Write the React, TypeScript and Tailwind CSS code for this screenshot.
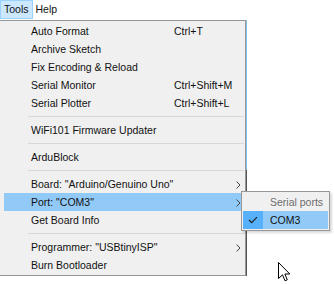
import type { ReactNode } from "react";

type Item =
  | { kind: "item"; label: string; shortcut?: string; submenu?: boolean; active?: boolean }
  | { kind: "sep" };

const items: Item[] = [
  { kind: "item", label: "Auto Format", shortcut: "Ctrl+T" },
  { kind: "item", label: "Archive Sketch" },
  { kind: "item", label: "Fix Encoding & Reload" },
  { kind: "item", label: "Serial Monitor", shortcut: "Ctrl+Shift+M" },
  { kind: "item", label: "Serial Plotter", shortcut: "Ctrl+Shift+L" },
  { kind: "sep" },
  { kind: "item", label: "WiFi101 Firmware Updater" },
  { kind: "sep" },
  { kind: "item", label: "ArduBlock" },
  { kind: "sep" },
  { kind: "item", label: 'Board: "Arduino/Genuino Uno"', submenu: true },
  { kind: "item", label: 'Port: "COM3"', submenu: true, active: true },
  { kind: "item", label: "Get Board Info" },
  { kind: "sep" },
  { kind: "item", label: 'Programmer: "USBtinyISP"', submenu: true },
  { kind: "item", label: "Burn Bootloader" },
];

function Chevron() {
  return (
    <svg width="5" height="8" viewBox="0 0 5 8" className="shrink-0">
      <path d="M0.5 0.5 L4 4 L0.5 7.5" fill="none" stroke="#444" strokeWidth="1" />
    </svg>
  );
}

function Row({ item }: { item: Extract<Item, { kind: "item" }> }): ReactNode {
  return (
    <div className={`flex h-[18px] items-center pl-[27px] pr-[3px] pt-px ${item.active ? "bg-[#91c9f7]" : ""}`}>
      <span className="w-[143px] shrink-0 whitespace-nowrap">{item.label}</span>
      <span className="whitespace-nowrap">{item.shortcut ?? ""}</span>
      {item.submenu ? (
        <span className="ml-auto">
          <Chevron />
        </span>
      ) : null}
    </div>
  );
}

export default function App() {
  return (
    <div className="relative h-[284px] w-[334px] overflow-hidden bg-white font-['Liberation_Sans',Arial,sans-serif] text-[10.5px] leading-none text-[#111]">
      {/* menu bar */}
      <div className="flex h-[20px] items-stretch">
        <div className="box-border flex h-[19px] items-center border border-[#99d1ff] bg-[#cce8ff] px-[3px]">Tools</div>
        <div className="flex h-[19px] items-center px-[3px]">Help</div>
      </div>

      {/* Tools dropdown */}
      <div className="flex w-[247px]">
        <div className="box-border w-[246px] border-t border-r border-b border-[#979797] bg-[#f0f0f0] py-[1px] pl-[4px] pr-[1px]">
          {items.map((item, i) =>
            item.kind === "sep" ? (
              <div key={i} className="flex h-[9px] items-center pl-[24px]">
                <div className="h-px w-full bg-[#d7d7d7]" />
              </div>
            ) : (
              <Row key={i} item={item} />
            )
          )}
        </div>
        <div className="flex w-px flex-col">
          <div className="h-[150px] bg-[#7fc4ee]" />
          <div className="flex-1 bg-[#555]" />
        </div>
      </div>

      {/* Port submenu */}
      <div className="absolute left-[241px] top-[191px] box-border w-[89px] whitespace-nowrap border border-[#979797] bg-[#f0f0f0] p-[1px] shadow-[2px_2px_2px_rgba(0,0,0,0.15)]">
        <div className="flex h-[18px] items-center pl-[27px] pt-px text-[#6d6d6d]">Serial ports</div>
        <div className="flex h-[18px] items-center bg-[#91c9f7]">
          <div className="flex h-full w-[20px] items-center justify-center bg-[#56b0fa]">
            <svg width="10" height="8" viewBox="0 0 10 8">
              <path d="M1 4 L3.7 6.7 L9 1.2" fill="none" stroke="#222" strokeWidth="1.2" />
            </svg>
          </div>
          <span className="pl-[7px] pt-px">COM3</span>
        </div>
      </div>

      {/* mouse cursor */}
      <svg className="absolute left-[278px] top-[262px]" width="13" height="20" viewBox="0 0 13 20">
        <path
          d="M0.5 0.5 L0.5 16.5 L4.5 12.8 L7 18.8 L9.3 17.8 L6.9 12 L11.8 12 Z"
          fill="#fff"
          stroke="#000"
          strokeWidth="1"
          strokeLinejoin="miter"
        />
      </svg>
    </div>
  );
}
